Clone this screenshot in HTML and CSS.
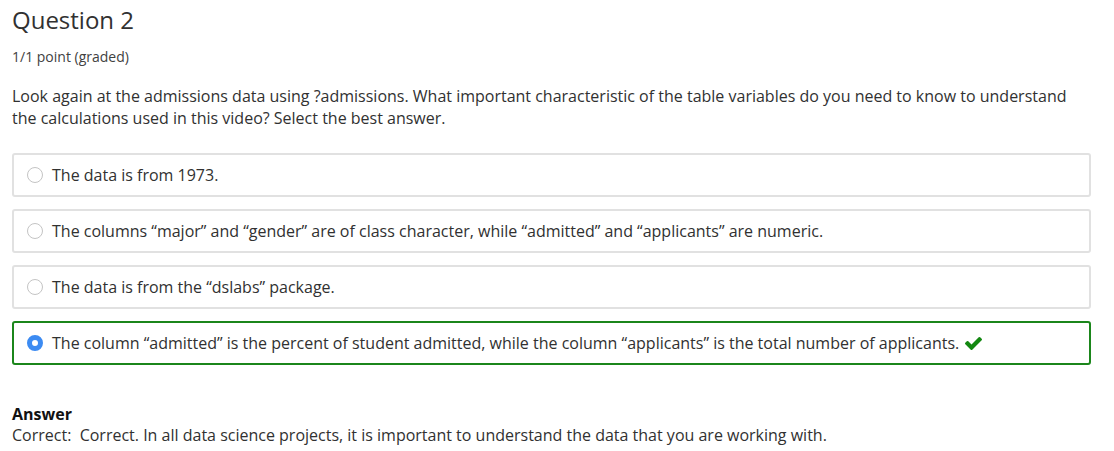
FILE: index.html
```html
<!DOCTYPE html>
<html>
<head>
<meta charset="utf-8">
<link rel="stylesheet" href="styles.css">
</head>
<body>
<div class="problem">
  <h3 class="title">Question 2</h3>
  <div class="points">1/1 point (graded)</div>
  <p class="prompt">Look again at the admissions data using ?admissions. What important characteristic of the table variables do you need to know to understand the calculations used in this video? Select the best answer.</p>
  <div class="choices">
    <label class="choice"><span class="radio"></span><span class="text">The data is from 1973.</span></label>
    <label class="choice"><span class="radio"></span><span class="text">The columns “major” and “gender” are of class character, while “admitted” and “applicants” are numeric.</span></label>
    <label class="choice"><span class="radio"></span><span class="text">The data is from the “dslabs” package.</span></label>
    <label class="choice correct"><span class="radio checked"></span><span class="text">The column “admitted” is the percent of student admitted, while the column “applicants” is the total number of applicants.</span>
      <svg class="check" width="17" height="13" viewBox="121 334 1550 1188"><path fill="#138811" d="M1671 566q0 40-28 68l-724 724-136 136q-28 28-68 28t-68-28l-136-136-362-362q-28-28-28-68t28-68l136-136q28-28 68-28t68 28l294 295 656-657q28-28 68-28t68 28l136 136q28 28 28 68z"/></svg>
    </label>
  </div>
  <div class="answer">
    <div class="answer-label">Answer</div>
    <div class="answer-text">Correct:&nbsp; Correct. In all data science projects, it is important to understand the data that you are working with.</div>
  </div>
</div>
</body>
</html>
```
FILE: styles.css
```css
html, body {
  margin: 0;
  padding: 0;
  background: #fff;
}
body {
  font-family: "Open Sans", "Noto Sans", sans-serif;
  color: #313131;
}
.problem {
  padding: 4px 23px 0 12px;
}
.title {
  margin: 0;
  font-size: 24px;
  font-weight: 400;
  line-height: 32px;
  color: #313131;
}
.points {
  margin-top: 11px;
  font-size: 14px;
  line-height: 20px;
  color: #414141;
}
.prompt {
  margin: 18px 0 0;
  font-size: 16px;
  line-height: 22px;
  color: #313131;
}
.choices {
  margin-top: 24px;
  display: flex;
  flex-direction: column;
  gap: 11px;
}
.choice {
  display: flex;
  align-items: center;
  height: 44px;
  box-sizing: border-box;
  border: 2px solid #e1e1e1;
  border-radius: 3px;
  padding-left: 13px;
  font-size: 16px;
}
.choices .choice + .choice {
  margin-top: 1px;
}
.choice.correct {
  border-color: #1b861b;
}
.radio {
  width: 16px;
  height: 16px;
  box-sizing: border-box;
  border: 1px solid #c4c4c4;
  border-radius: 50%;
  margin-right: 9px;
  flex: none;
}
.radio.checked {
  border: 5px solid #3c8bf2;
  background: #fff;
}
.text {
  line-height: 22px;
}
.check {
  margin-left: 6px;
}
.answer {
  margin-top: 39px;
  font-size: 16px;
  line-height: 21px;
}
.answer-label {
  font-weight: 700;
  color: #111;
}
.answer-text {
  color: #313131;
}
```
